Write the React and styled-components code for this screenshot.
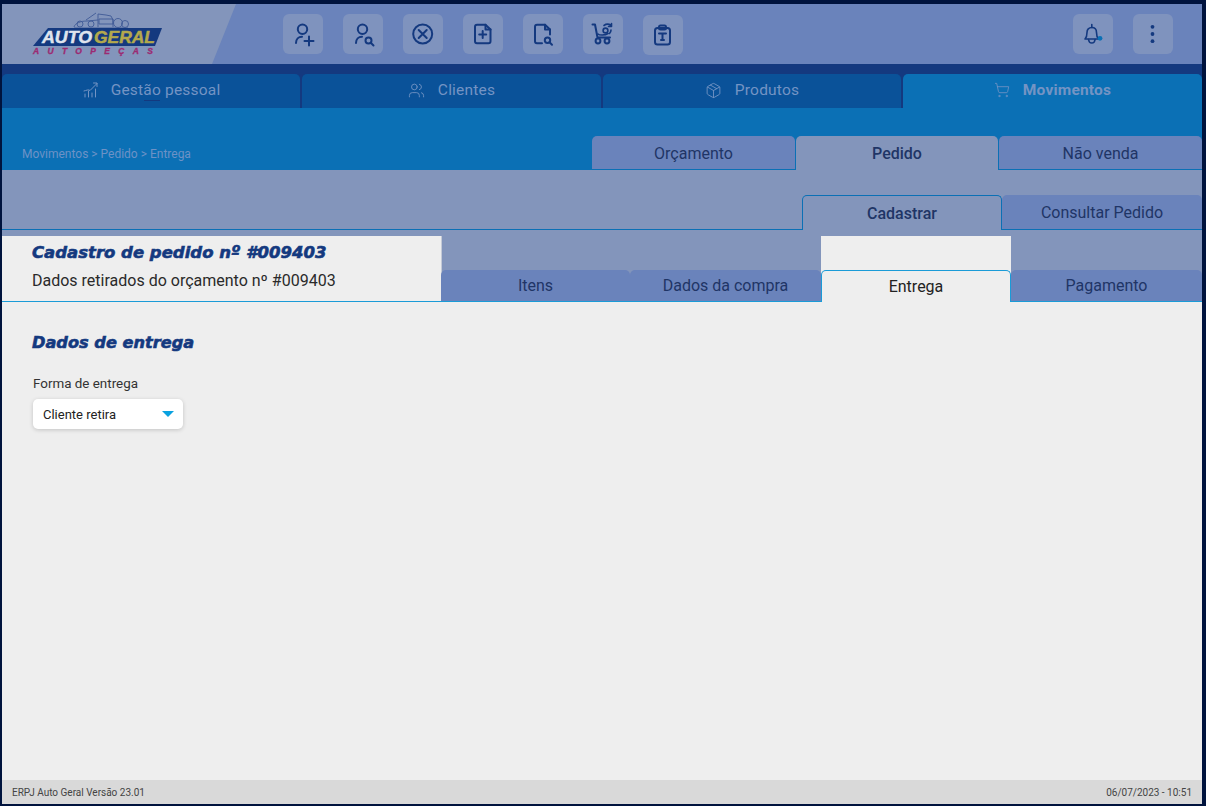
import React from 'react'
import styled, { createGlobalStyle } from 'styled-components'
import { Users, Package, ShoppingCart } from 'lucide-react'

const NAVY = '#14397f'
const HEADER = '#6a83bb'
const PALE = '#8395bb'
const OCEAN = '#0b70b5'
const DEEP = '#0a5299'
const PAPER = '#eeeeee'

const GlobalStyle = createGlobalStyle`
  html, body {
    margin: 0;
    height: 100%;
    overflow: hidden;
    background: #00133d;
  }
  * {
    box-sizing: border-box;
  }
  body {
    font-family: Roboto, 'Liberation Sans', sans-serif;
  }
`

const Frame = styled.div`
  height: 806px;
  padding: 4px 4px 2px 2px;
  display: flex;
  flex-direction: column;
  background: #00133d;
`

const Header = styled.header`
  height: 60px;
  flex: none;
  display: flex;
  align-items: center;
  background: ${HEADER};
  padding-right: 29px;
`

const LogoPanel = styled.div`
  width: 234px;
  height: 60px;
  flex: none;
  margin-right: 47px;
  padding: 7px 0 0 28px;
  background: ${PALE};
  clip-path: polygon(0 0, 100% 0, 210px 100%, 0 100%);
`

const Toolbar = styled.div`
  display: flex;
  align-items: center;
  gap: 20px;
  &:last-child {
    margin-left: auto;
  }
`

const IconTile = styled.button`
  width: 40px;
  height: 40px;
  padding: 0;
  border: 0;
  border-radius: 6px;
  background: #7f93be;
  margin-top: ${({ $low }) => ($low ? '2px' : '0')};
  svg {
    display: block;
  }
`

const Glyph = ({ children }) => (
  <svg width="40" height="40" viewBox="0 0 40 40" fill="none" stroke={NAVY} strokeWidth="2" strokeLinecap="round" strokeLinejoin="round">
    {children}
  </svg>
)

const Band = styled.div`
  height: 10px;
  flex: none;
  background: ${NAVY};
`

const MainTabs = styled.nav`
  display: grid;
  grid-template-columns: 298px 299px 298px 1fr;
  column-gap: 2px;
  height: 34px;
  flex: none;
  background: ${NAVY};
`

const MainTab = styled.div`
  display: flex;
  align-items: center;
  justify-content: center;
  gap: 13px;
  padding-bottom: 2px;
  border-radius: 5px 5px 0 0;
  font-size: 15.5px;
  letter-spacing: 0.2px;
  font-weight: ${({ $active }) => ($active ? 700 : 400)};
  color: #7494c4;
  background: ${({ $active }) => ($active ? OCEAN : DEEP)};
`

const CursorMark = styled.span`
  position: relative;
  &::after {
    content: '';
    position: absolute;
    left: 1px;
    right: 1px;
    bottom: -2px;
    height: 1px;
    background: ${NAVY};
  }
`

const SectionBar = styled.div`
  height: 62px;
  flex: none;
  display: flex;
  align-items: flex-end;
  justify-content: space-between;
  background: ${OCEAN};
`

const Crumbs = styled.div`
  padding: 0 0 9px 20px;
  font-size: 12px;
  color: #6d92c6;
`

const SectionTabs = styled.div`
  display: grid;
  grid-template-columns: 203px 202px 203px;
  column-gap: 1px;
`

const SectionTab = styled.div`
  height: 34px;
  padding-top: 1px;
  display: flex;
  align-items: center;
  justify-content: center;
  border-radius: 5px 5px 0 0;
  font-size: 16px;
  font-weight: ${({ $active }) => ($active ? 500 : 400)};
  color: #1f3566;
  background: ${({ $active }) => ($active ? PALE : HEADER)};
  border-bottom: 1px solid ${({ $active }) => ($active ? PALE : OCEAN)};
`

const ActionBar = styled.div`
  height: 66px;
  flex: none;
  padding-top: 25px;
  display: flex;
  align-items: flex-start;
  justify-content: flex-end;
  background: ${PALE};
`

const ActionRail = styled.div`
  flex: 1;
  height: 35px;
  border-bottom: 1px solid ${OCEAN};
`

const ActionTab = styled.div`
  width: 200px;
  height: 35px;
  display: flex;
  align-items: center;
  justify-content: center;
  font-size: 16px;
  color: #1f3566;
  border-radius: 5px 5px 0 0;
  font-weight: ${({ $active }) => ($active ? 500 : 400)};
  background: ${({ $active }) => ($active ? PALE : HEADER)};
  border: 1px solid ${OCEAN};
  border-width: ${({ $active }) => ($active ? '1px 1px 0 1px' : '0 0 1px 0')};
`

const SplitRow = styled.div`
  height: 66px;
  flex: none;
  display: grid;
  grid-template-columns: 439px 189px 191px 190px 1fr;
  background: ${PALE};
  border-bottom: 1px solid #1a9bd7;
`

const OrderInfo = styled.div`
  margin-right: -1px;
  padding: 6px 0 0 30px;
  background: ${PAPER};
  border-right: 1px solid #c4cad6;
`

const Title = styled.h1`
  margin: 0;
  font-family: 'DejaVu Sans', sans-serif;
  font-size: 16.5px;
  line-height: 22px;
  font-weight: 700;
  font-style: italic;
  color: ${NAVY};
  -webkit-text-stroke: 0.6px ${NAVY};
`

const Subtitle = styled.p`
  margin: 7px 0 0;
  font-size: 16px;
  line-height: 20px;
  color: #2a2a2a;
`

const TabSlot = styled.div`
  display: flex;
  flex-direction: column;
  justify-content: flex-end;
  position: relative;
  background: ${({ $active }) => ($active ? PAPER : 'transparent')};
`

const StepTab = styled.div`
  height: ${({ $active }) => ($active ? '32px' : '31px')};
  margin-bottom: ${({ $active }) => ($active ? '-1px' : '0')};
  padding-bottom: ${({ $active }) => ($active ? '1px' : '0')};
  display: flex;
  align-items: center;
  justify-content: center;
  font-size: 16px;
  border-radius: 5px 5px 0 0;
  color: ${({ $active }) => ($active ? '#222' : '#1f3566')};
  background: ${({ $active }) => ($active ? PAPER : HEADER)};
  border: ${({ $active }) => ($active ? '1px solid #1a9bd7' : '0')};
  border-bottom: 0;
`

const Content = styled.main`
  flex: 1;
  padding: 30px 30px 0;
  background: ${PAPER};
`

const SectionTitle = styled.h2`
  margin: 0;
  font-family: 'DejaVu Sans', sans-serif;
  font-size: 16.2px;
  line-height: 22px;
  font-weight: 700;
  font-style: italic;
  color: ${NAVY};
  -webkit-text-stroke: 0.6px ${NAVY};
`

const FieldLabel = styled.label`
  display: block;
  margin: 22px 0 7px 1px;
  font-size: 13.4px;
  line-height: 16px;
  color: #333;
`

const Select = styled.div`
  width: 150px;
  height: 30px;
  margin-left: 1px;
  padding: 0 9px 0 10px;
  display: flex;
  align-items: center;
  justify-content: space-between;
  border-radius: 5px;
  background: #fff;
  font-size: 13px;
  color: #222;
  box-shadow: 0 1px 4px rgba(0, 0, 0, 0.18);
`

const Caret = styled.span`
  width: 0;
  height: 0;
  border-left: 6px solid transparent;
  border-right: 6px solid transparent;
  border-top: 6px solid #0aa2e0;
`

const Footer = styled.footer`
  height: 24px;
  flex: none;
  padding: 0 10px;
  display: flex;
  align-items: center;
  justify-content: space-between;
  background: #d9d9d9;
  font-size: 10px;
  color: #444;
`

const logoFont = "'Liberation Sans', sans-serif"

const Logo = () => (
  <svg width="134" height="46" viewBox="0 0 134 46">
    <g fill="none" stroke="#3f5a96" strokeWidth="0.9">
      <path d="M44 16c1-4 7-6 13-6l11-1" />
      <circle cx="50" cy="13" r="3" />
      <circle cx="61" cy="13" r="3" />
      <path d="M68 16V3l8 1 5 1 2 4v7" />
      <path d="M69 8h14v5H69z" />
      <circle cx="88" cy="12" r="4.500" />
      <circle cx="95" cy="13" r="3.500" />
      <path d="M66 2 56 9M44 17h54" />
    </g>
    <path d="M3 35 18 17h114l-7 18z" fill={NAVY} />
    <g fontFamily={logoFont} fontWeight="700" fontStyle="italic">
      <text x="12" y="32" fontSize="17" fill="#dfe4ee" stroke="#dfe4ee" strokeWidth="0.5" textLength="50" lengthAdjust="spacingAndGlyphs">AUTO</text>
      <text x="64" y="32" fontSize="17" fill="#b3a94d" stroke="#b3a94d" strokeWidth="0.5" textLength="61" lengthAdjust="spacingAndGlyphs">GERAL</text>
      <text x="3" y="43" fontSize="8.500" fill="#9c2a72" stroke="#9c2a72" strokeWidth="0.3" textLength="120">AUTOPEÇAS</text>
    </g>
  </svg>
)

const GrowthIcon = () => (
  <svg width="16" height="16" viewBox="0 0 16 16" fill="none" stroke="#7494c4" strokeWidth="1" strokeLinecap="round" strokeLinejoin="round">
    <path d="M3 15v-3M6.500 15V9M10 15v-4M13.500 15V7" />
    <path d="M2 9c2.500-.500 4.500-2 6-.500L15 1.500M11.500 1H15v3.500" />
  </svg>
)

const toolIcons = [
  <Glyph key="a">
    <circle cx="19.500" cy="15.300" r="4.700" />
    <path d="M13 29c0-4 2.500-6.300 6-6.300M21.500 27h9M26 22.500v9" />
  </Glyph>,
  <Glyph key="b">
    <circle cx="19.500" cy="15.300" r="4.700" />
    <path d="M13 29c0-4 2.500-6.300 6-6.300" />
    <circle cx="25.500" cy="26.500" r="3" />
    <path d="M28 29l2.500 2.500" />
  </Glyph>,
  <Glyph key="c">
    <circle cx="19.700" cy="20" r="9.500" />
    <path d="M15.700 16l8 8M23.700 16l-8 8" />
  </Glyph>,
  <Glyph key="d">
    <path d="M22.500 10.700H14a2 2 0 0 0-2 2v14.600a2 2 0 0 0 2 2h11.500a2 2 0 0 0 2-2V15.500z" />
    <path d="M22.500 10.700v4.800h5M19.700 17v7M16.200 20.500h7" />
  </Glyph>,
  <Glyph key="e">
    <path d="M19 29.300h-5a2 2 0 0 1-2-2V12.700a2 2 0 0 1 2-2h8l5 4.800v5" />
    <path d="M22 10.700v4.800h5" />
    <circle cx="24.500" cy="26.300" r="2.700" />
    <path d="M26.500 28.300l2.500 2.500" />
  </Glyph>,
  <Glyph key="f">
    <path d="M9.500 10.500h2.500l2.500 13H27" />
    <circle cx="15" cy="27" r="2.400" />
    <circle cx="24" cy="27" r="2.400" />
    <circle cx="22.500" cy="16.500" r="2.400" strokeWidth="1.600" />
    <path d="M15 20c1.500 1.500 7 1.500 10-.500M21 11.500c2-1.500 5-1.500 7 0M28.500 9.500v3h-3M28 16c0 1.500-.500 2.500-1.500 3.500" strokeWidth="1.600" />
  </Glyph>,
  <Glyph key="g">
    <rect x="12" y="13" width="15" height="16.500" rx="2.500" />
    <rect x="16" y="10.500" width="7" height="4" rx="1.500" />
    <path d="M16 18.500h7M19.500 18.500v6.500M18 25h3" />
  </Glyph>,
]

const App = () => (
  <Frame>
    <GlobalStyle />
    <Header>
      <LogoPanel>
        <Logo />
      </LogoPanel>
      <Toolbar>
        {toolIcons.map((icon, index) => (
          <IconTile key={index} $low={index === toolIcons.length - 1}>
            {icon}
          </IconTile>
        ))}
      </Toolbar>
      <Toolbar>
        <IconTile>
          <Glyph>
            <path d="M12 25h13.500c-1.500-1.500-2-3-2-6.500 0-3-1.700-5-4.700-5s-4.800 2-4.800 5c0 3.500-.5 5-2 6.500z" strokeWidth="1.600" />
            <path d="M18.800 10.500v3M15.500 25.500c.3 2.200 1.500 3.500 3.300 3.500s3-1.300 3.300-3.500" strokeWidth="1.600" />
            <circle cx="27" cy="24.300" r="2.400" fill={OCEAN} stroke="none" />
          </Glyph>
        </IconTile>
        <IconTile>
          <Glyph>
            <circle cx="19.500" cy="12.800" r="1.900" fill={NAVY} stroke="none" />
            <circle cx="19.500" cy="20" r="1.900" fill={NAVY} stroke="none" />
            <circle cx="19.500" cy="27.200" r="1.900" fill={NAVY} stroke="none" />
          </Glyph>
        </IconTile>
      </Toolbar>
    </Header>
    <Band />
    <MainTabs>
      <MainTab>
        <GrowthIcon />
        <span>
          Gest<CursorMark>ão</CursorMark> pessoal
        </span>
      </MainTab>
      <MainTab>
        <Users size={17} strokeWidth={1.25} />
        Clientes
      </MainTab>
      <MainTab>
        <Package size={17} strokeWidth={1.25} />
        Produtos
      </MainTab>
      <MainTab $active>
        <ShoppingCart size={16} strokeWidth={1.25} />
        Movimentos
      </MainTab>
    </MainTabs>
    <SectionBar>
      <Crumbs>Movimentos &gt; Pedido &gt; Entrega</Crumbs>
      <SectionTabs>
        <SectionTab>Orçamento</SectionTab>
        <SectionTab $active>Pedido</SectionTab>
        <SectionTab>Não venda</SectionTab>
      </SectionTabs>
    </SectionBar>
    <ActionBar>
      <ActionRail />
      <ActionTab $active>Cadastrar</ActionTab>
      <ActionTab>Consultar Pedido</ActionTab>
    </ActionBar>
    <SplitRow>
      <OrderInfo>
        <Title>Cadastro de pedido nº #009403</Title>
        <Subtitle>Dados retirados do orçamento nº #009403</Subtitle>
      </OrderInfo>
      <TabSlot>
        <StepTab>Itens</StepTab>
      </TabSlot>
      <TabSlot>
        <StepTab>Dados da compra</StepTab>
      </TabSlot>
      <TabSlot $active>
        <StepTab $active>Entrega</StepTab>
      </TabSlot>
      <TabSlot>
        <StepTab>Pagamento</StepTab>
      </TabSlot>
    </SplitRow>
    <Content>
      <SectionTitle>Dados de entrega</SectionTitle>
      <FieldLabel>Forma de entrega</FieldLabel>
      <Select>
        Cliente retira
        <Caret />
      </Select>
    </Content>
    <Footer>
      <span>ERPJ Auto Geral Versão 23.01</span>
      <span>06/07/2023 - 10:51</span>
    </Footer>
  </Frame>
)

export default App
